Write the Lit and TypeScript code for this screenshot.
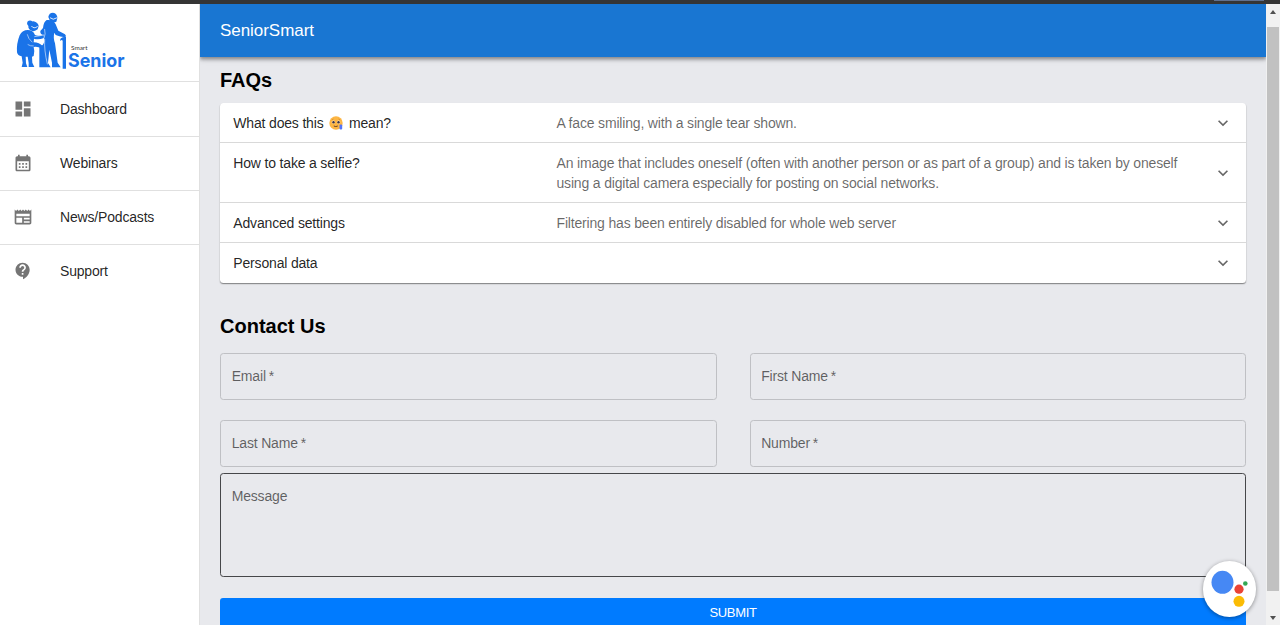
import { LitElement, html, css, svg, nothing } from "lit";
import { customElement, state } from "lit/decorators.js";

const NAV = [
  { label: "Dashboard", path: "M3 13h8V3H3v10zm0 8h8v-6H3v6zm10 0h8V11h-8v10zm0-18v6h8V3h-8z" },
  {
    label: "Webinars",
    path: "M19 4h-1V2h-2v2H8V2H6v2H5c-1.11 0-1.99.9-1.99 2L3 20c0 1.1.89 2 2 2h14c1.1 0 2-.9 2-2V6c0-1.1-.9-2-2-2zm0 16H5V10h14v10zM9 14H7v-2h2v2zm4 0h-2v-2h2v2zm4 0h-2v-2h2v2zm-8 4H7v-2h2v2zm4 0h-2v-2h2v2zm4 0h-2v-2h2v2z",
  },
  {
    label: "News/Podcasts",
    path: "M22 3l-1.67 1.67L18.67 3 17 4.67 15.33 3l-1.66 1.67L12 3l-1.67 1.67L8.67 3 7 4.67 5.33 3 3.67 4.67 2 3v16c0 1.1.9 2 2 2h16c1.1 0 2-.9 2-2V3zM11 19H4v-6h7v6zm9 0h-7v-2h7v2zm0-4h-7v-2h7v2zm0-4H4V8h16v3z",
  },
  {
    label: "Support",
    path: "M11.5 2C6.81 2 3 5.81 3 10.5S6.81 19 11.5 19h.5v3c4.86-2.34 8-7 8-11.5C20 5.81 16.19 2 11.5 2zm1 14.5h-2v-2h2v2zm0-3.5h-2c0-3.25 3-3 3-5 0-1.1-.9-2-2-2s-2 .9-2 2h-2c0-2.21 1.79-4 4-4s4 1.79 4 4c0 2.5-3 2.75-3 5z",
  },
];

const tearFace = html`<svg class="emoji" viewBox="0 0 14 14">
  <circle cx="7" cy="7" r="6.7" fill="#fdb644" />
  <circle cx="4.4" cy="6.1" r="1.7" fill="#fbe7cf" />
  <circle cx="9.6" cy="6.1" r="1.7" fill="#fbe7cf" />
  <circle cx="4.5" cy="6.2" r="1.2" fill="#3c3340" />
  <circle cx="9.5" cy="6.2" r="1.2" fill="#3c3340" />
  <path d="M2.8 3.8l1.8-.8M11.2 3.8l-1.8-.8" stroke="#c98428" stroke-width=".6" />
  <path d="M4.8 10q2 1.2 4 0" fill="none" stroke="#6b4427" stroke-width="1" />
  <rect x="10.5" y="8.6" width="2.7" height="4.9" rx="1" fill="#5574f7" />
</svg>`;

const FAQS = [
  { q: html`What does this ${tearFace} mean?`, a: "A face smiling, with a single tear shown." },
  {
    q: "How to take a selfie?",
    a: "An image that includes oneself (often with another person or as part of a group) and is taken by oneself using a digital camera especially for posting on social networks.",
  },
  { q: "Advanced settings", a: "Filtering has been entirely disabled for whole web server" },
  { q: "Personal data", a: "" },
];

@customElement("senior-logo")
export class SeniorLogo extends LitElement {
  static styles = css`
    :host { display: block; }
    .art { display: block; width: 130px; height: 77px; }
    .small { font: 6px Lato, sans-serif; letter-spacing: 0; fill: #333; }
    .big { font: 700 18.5px Inter, "Open Sans", sans-serif; letter-spacing: 0; fill: #1a73e8; }
  `;
  render() {
    return html`<svg class="art" viewBox="0 4 130 77">
      <g transform="scale(.33333)" fill="#1a73e8">
        <circle cx="90" cy="70" r="8.5" />
        <path d="M85 82Q84 65 101 64Q114 67 116 78L113 88Q105 95 97 93Q88 92 85 82Z" />
        <path d="M76 91Q98 87 105 105Q115 110 131 104L132 114Q115 120 102 116L101 127Q118 128 128 138L125 145Q111 138 101 141Q105 153 101 168L96 170L97 188L103 201L86 201L86 189L83 170L77 170L78 190L82 201L65 201L68 188L65 169Q53 168 51 157Q49 131 59 106Q65 94 76 91Z" />
        <path d="M145 51Q147 38 159 38Q172 40 172 54L169 65Q158 69 150 63Z" />
        <path d="M140 60Q161 58 167 73L175 92L195 103Q200 107 196 112Q180 111 167 105L163 98Q159 112 165 130L173 188L182 202L156 202L156 188L148 149L144 189L152 202L118 202L118 138Q130 140 133 124L131 105Q120 104 121 93L129 84Q131 65 140 60Z" />
        <path d="M180 121Q180 115 188 112L198 110V206H188V122Q185 118 182 122Z" />
      </g>
      <g transform="scale(.33333)" fill="none" stroke="#fff" stroke-width="2.5" stroke-linecap="round">
        <path d="M95 79Q101 88 112 80M151 54Q159 62 170 54" />
        <path d="M131 105Q117 108 104 110M134 88Q138 102 132 115M134 118Q132 150 142 192" stroke-width="1.7" />
        <path d="M82 104Q84 116 96 126M100 138Q91 139 84 134" stroke-width="1.6" />
      </g>
      <text class="small" x="71" y="49.8" textLength="16.5" lengthAdjust="spacingAndGlyphs">Smart</text>
      <text class="big" x="68" y="66.7" textLength="56.5" lengthAdjust="spacingAndGlyphs">Senior</text>
    </svg>`;
  }
}

@customElement("app-root")
export class AppRoot extends LitElement {
  @state() private current = 0;

  static styles = css`
    :host {
      display: flex;
      flex-direction: column;
      height: 100vh;
      overflow: hidden;
      font-family: "Liberation Sans", Arial, sans-serif;
      font-size: 14px;
      letter-spacing: -0.175px;
      line-height: 20px;
      color: rgba(0, 0, 0, 0.87);
      background: #e8e9ed;
    }
    * { box-sizing: border-box; }
    .chrome { flex: none; height: 4px; background: #353535; display: flex; justify-content: flex-end; padding-right: 16px; }
    .tab { width: 50px; height: 1px; background: #60708e; }
    .shell { flex: 1; min-height: 0; display: grid; grid-template-columns: 200px 1fr 14px; }
    .side { background: #fff; border-right: 1px solid #e0e0e0; }
    .brand { height: 77.4px; }
    .nav { display: flex; align-items: center; height: 54.15px; padding: 0 13.333px; border-top: 1px solid #e0e0e0; cursor: pointer; }
    .nav svg { width: 20px; height: 20px; margin-right: 26.667px; fill: #757575; }
    .main { min-width: 0; min-height: 0; overflow: hidden; }
    .bar {
      height: 53.4px; padding: 1px 20px 0; display: flex; align-items: center; position: relative;
      background: #1976d2; color: #fff; font-size: 17px; letter-spacing: -0.05px;
      box-shadow: 0 2px 3px rgba(0, 0, 0, 0.25), 0 3px 4px rgba(0, 0, 0, 0.14), 0 1px 8px rgba(0, 0, 0, 0.12);
    }
    .content { padding: 10.6px 20px 0; }
    .title { margin: 0; font-size: 20px; font-weight: 700; line-height: 24px; color: #000; letter-spacing: 0; }
    .faqs {
      margin-top: 10.6px; border-radius: 3.5px; background: #fff;
      box-shadow: 0 1px 1px rgba(0, 0, 0, 0.36), 0 1px 2px rgba(0, 0, 0, 0.14);
    }
    .faq { display: flex; align-items: center; padding: 10px 13.333px; }
    .faq:first-child { padding-bottom: 9px; }
    .faq + .faq { border-top: 1px solid #d9d9d9; padding-top: 10px; padding-bottom: 9px; }
    .faq:last-child { padding-bottom: 10.4px; }
    .texts { flex: 1; display: flex; min-width: 0; }
    .q { width: 33%; flex: none; height: 20px; }
    .a { color: rgba(0, 0, 0, 0.6); }
    .arrow { flex: none; width: 20px; height: 20px; fill: rgba(0, 0, 0, 0.6); }
    .emoji { width: 14px; height: 14px; margin: 0 2px; vertical-align: -2.5px; }
    .contact { margin-top: 31.3px; }
    .form { margin-top: 14.8px; display: grid; grid-template-columns: 1fr 1fr; gap: 20px 33px; }
    .field { height: 46.9px; padding: 12px 10.7px; border: 1px solid #bfc0c4; border-radius: 3.333px; color: rgba(0, 0, 0, 0.6); }
    .star { margin-left: -0.8px; }
    .message { height: 104px; margin-top: 6.6px; border-color: #46474a; }
    .submit {
      display: block; width: 100%; height: 34px; margin: 20.4px 0 0; padding: 0 0 4px; border: 0; border-radius: 3px 3px 0 0;
      background: #007bff; color: #fff; font: inherit; font-size: 13px; letter-spacing: -0.35px;
    }
    .scroll { background: #f1f1f1; display: flex; flex-direction: column; align-items: center; padding-top: 6px; }
    .scroll svg { width: 6px; height: 4px; fill: #505050; flex: none; }
    .thumb { flex: none; width: 11.5px; height: 564px; margin: 13px 0 25px; background: #c1c1c1; }
    .fab { position: absolute; right: 24px; bottom: 8.5px; width: 53.5px; height: 55.5px; border-radius: 50%; background: #fff; box-shadow: 0 1px 4px rgba(0, 0, 0, 0.4); }
    .fab svg { display: block; width: 54px; height: 56px; }
  `;

  private icon(path: string, cls = "") {
    return html`<svg class=${cls} viewBox="0 0 24 24">${svg`<path d=${path} />`}</svg>`;
  }

  render() {
    return html`
      <div class="chrome"><div class="tab"></div></div>
      <div class="shell">
        <nav class="side">
          <senior-logo class="brand"></senior-logo>
          ${NAV.map(
            (n, i) => html`<div class="nav" @click=${() => (this.current = i)}>${this.icon(n.path)}<span>${n.label}</span></div>`
          )}
        </nav>
        <main class="main">
          <header class="bar">SeniorSmart</header>
          <div class="content">
            <h2 class="title">FAQs</h2>
            <div class="faqs">
              ${FAQS.map(
                (f) => html`<div class="faq">
                  <div class="texts"><div class="q">${f.q}</div>${f.a ? html`<div class="a">${f.a}</div>` : nothing}</div>
                  ${this.icon("M16.59 8.59 12 13.17 7.41 8.59 6 10l6 6 6-6z", "arrow")}
                </div>`
              )}
            </div>
            <h2 class="title contact">Contact Us</h2>
            <div class="form">
              ${["Email", "First Name", "Last Name", "Number"].map(
                (l) => html`<div class="field">${l} <span class="star">*</span></div>`
              )}
            </div>
            <div class="field message">Message</div>
            <button class="submit">SUBMIT</button>
          </div>
        </main>
        <div class="scroll">
          <svg viewBox="0 0 6 4"><path d="M0 4L3 0L6 4Z" /></svg>
          <div class="thumb"></div>
          <svg viewBox="0 0 6 4"><path d="M0 0L3 4L6 0Z" /></svg>
        </div>
      </div>
      <div class="fab">
        <svg viewBox="0 0 54 56">
          <ellipse cx="19.5" cy="21.3" rx="11" ry="11.5" fill="#4688f4" />
          <circle cx="36" cy="28.2" r="4.6" fill="#ea4335" />
          <circle cx="42.3" cy="22.5" r="2.3" fill="#34a853" />
          <circle cx="36" cy="40.3" r="5.5" fill="#fbbc04" />
        </svg>
      </div>
    `;
  }
}
